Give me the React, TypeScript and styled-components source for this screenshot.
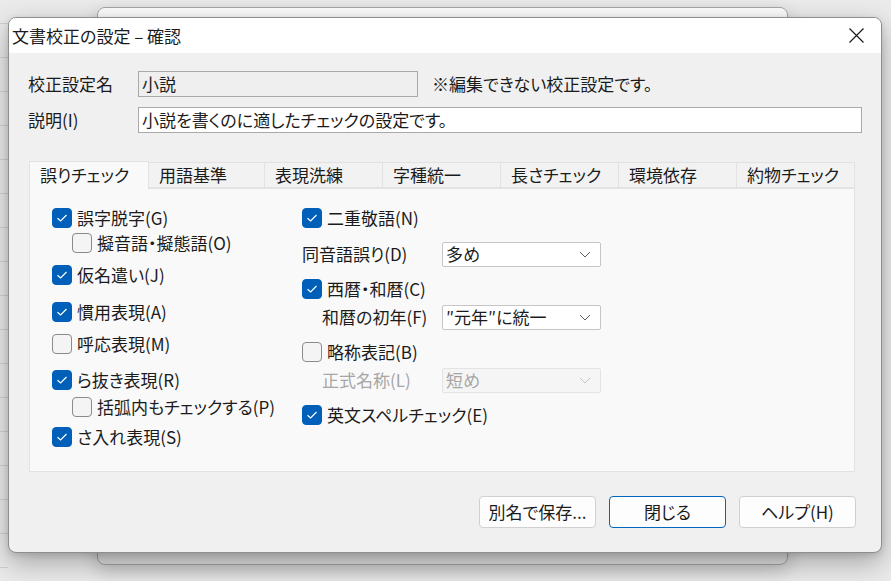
import styled, { createGlobalStyle } from "styled-components";

const GlobalStyle = createGlobalStyle`
  html, body {
    margin: 0;
    padding: 0;
  }
  body {
    font-family: "Noto Sans CJK JP", "Noto Sans", sans-serif;
    font-feature-settings: "palt";
    color: #1b1b1b;
    font-size: 17px;
  }
`;

const tabs = ["誤りチェック", "用語基準", "表現洗練", "字種統一", "長さチェック", "環境依存", "約物チェック"];
const tabWidths = [120, 116, 118, 118, 118, 118, 118];

function Check({ checked }: { checked?: boolean }) {
  return (
    <CheckBox $checked={checked}>
      {checked && (
        <svg width="12" height="10" viewBox="0 0 12 10">
          <path d="M1.5 5.2 L4.6 8 L10.5 2" fill="none" stroke="#fff" strokeWidth="1.2" />
        </svg>
      )}
    </CheckBox>
  );
}

function Chevron({ color = "#5f5f5f" }: { color?: string }) {
  return (
    <svg width="12" height="7" viewBox="0 0 12 7">
      <path d="M1 1 L6 6 L11 1" fill="none" stroke={color} strokeWidth="1" />
    </svg>
  );
}

export default function App() {
  return (
    <Desktop>
      <GlobalStyle />
      <BackWindow>
        <BackTitle />
      </BackWindow>

      <Dialog>
        <TitleBar>
          <Title>文書校正の設定 – 確認</Title>
          <CloseButton>
            <svg width="15" height="15" viewBox="0 0 15 15">
              <path d="M0.5 0.5 L14.5 14.5 M14.5 0.5 L0.5 14.5" stroke="#1b1b1b" strokeWidth="1.2" />
            </svg>
          </CloseButton>
        </TitleBar>

        <Body>
          <FieldRow>
            <FieldLabel>校正設定名</FieldLabel>
            <TextBox $readOnly $width={280}>小説</TextBox>
            <Note>※編集できない校正設定です。</Note>
          </FieldRow>
          <FieldRow $mt={10}>
            <FieldLabel>説明(I)</FieldLabel>
            <TextBox>小説を書くのに適したチェックの設定です。</TextBox>
          </FieldRow>

          <TabArea>
            <TabList>
              {tabs.map((t, i) => (
                <Tab key={t} $active={i === 0} $first={i === 0} $width={tabWidths[i]}>
                  {t}
                </Tab>
              ))}
            </TabList>
            <Panel>
              <Column $width={250}>
                <Row>
                  <Check checked />
                  誤字脱字(G)
                </Row>
                <Row $mt={1} $indent={20}>
                  <Check />
                  擬音語・擬態語(O)
                </Row>
                <Row $mt={8}>
                  <Check checked />
                  仮名遣い(J)
                </Row>
                <Row $mt={13}>
                  <Check checked />
                  慣用表現(A)
                </Row>
                <Row $mt={8}>
                  <Check />
                  呼応表現(M)
                </Row>
                <Row $mt={12}>
                  <Check checked />
                  ら抜き表現(R)
                </Row>
                <Row $mt={3} $indent={20}>
                  <Check />
                  括弧内もチェックする(P)
                </Row>
                <Row $mt={6}>
                  <Check checked />
                  さ入れ表現(S)
                </Row>
              </Column>

              <Column $width={320}>
                <Row>
                  <Check checked />
                  二重敬語(N)
                </Row>
                <Row $mt={12}>
                  <SelectLabel>同音語誤り(D)</SelectLabel>
                  <Select>
                    多め
                    <Chevron />
                  </Select>
                </Row>
                <Row $mt={11}>
                  <Check checked />
                  西暦・和暦(C)
                </Row>
                <Row $mt={4}>
                  <SelectLabel $indent={20}>和暦の初年(F)</SelectLabel>
                  <Select>
                    ″元年″に統一
                    <Chevron />
                  </Select>
                </Row>
                <Row $mt={11}>
                  <Check />
                  略称表記(B)
                </Row>
                <Row $mt={4}>
                  <SelectLabel $indent={20} $disabled>
                    正式名称(L)
                  </SelectLabel>
                  <Select $disabled>
                    短め
                    <Chevron color="#c4c4c4" />
                  </Select>
                </Row>
                <Row $mt={11}>
                  <Check checked />
                  英文スペルチェック(E)
                </Row>
              </Column>
            </Panel>
          </TabArea>

          <Footer>
            <Button>別名で保存...</Button>
            <Button $primary>閉じる</Button>
            <Button>ヘルプ(H)</Button>
          </Footer>
        </Body>
      </Dialog>
    </Desktop>
  );
}

const Desktop = styled.div`
  position: relative;
  width: 891px;
  height: 581px;
  overflow: hidden;
  background-color: #ebebeb;
  background-image: repeating-linear-gradient(
    to bottom,
    transparent 0,
    transparent 33px,
    #d2d2d2 33px,
    #d2d2d2 34px
  );
  background-size: 8px 640px;
  background-position: 0 -10px;
  background-repeat: no-repeat;
`;

const BackWindow = styled.div`
  position: absolute;
  left: 97px;
  top: 7px;
  width: 691px;
  height: 558px;
  box-sizing: border-box;
  border: 1px solid #a4a4a4;
  border-radius: 8px;
  background: #dedede;
  box-shadow: 0 6px 18px rgba(0, 0, 0, 0.18);
  overflow: hidden;
`;

const BackTitle = styled.div`
  height: 35px;
  background: #fbfbfb;
  border-bottom: 1px solid #e6e6e6;
`;

const Dialog = styled.div`
  position: absolute;
  left: 8px;
  top: 17px;
  width: 874px;
  height: 536px;
  box-sizing: border-box;
  display: flex;
  flex-direction: column;
  border: 1px solid #8e8e8e;
  border-radius: 8px;
  background: #f0f0f0;
  overflow: hidden;
  box-shadow: 0 10px 28px rgba(0, 0, 0, 0.3), 0 2px 6px rgba(0, 0, 0, 0.12);
`;

const TitleBar = styled.div`
  height: 35px;
  flex-shrink: 0;
  display: flex;
  align-items: center;
  justify-content: space-between;
  background: #ffffff;
`;

const Title = styled.div`
  padding-left: 3px;
  font-size: 17px;
  line-height: 20px;
  color: #1b1b1b;
`;

const CloseButton = styled.div`
  width: 50px;
  height: 35px;
  display: flex;
  align-items: center;
  justify-content: center;
`;

const Body = styled.div`
  flex: 1;
  display: flex;
  flex-direction: column;
  padding: 18px 19px 0 19px;
`;

const FieldRow = styled.div<{ $mt?: number }>`
  display: flex;
  align-items: center;
  height: 26px;
  margin-top: ${(p) => p.$mt ?? 0}px;
`;

const FieldLabel = styled.div`
  width: 110px;
  flex-shrink: 0;
  font-size: 17px;
  line-height: 20px;
`;

const TextBox = styled.div<{ $readOnly?: boolean; $width?: number }>`
  ${(p) => (p.$width ? `width: ${p.$width}px;` : "flex: 1;")}
  height: 26px;
  box-sizing: border-box;
  display: flex;
  align-items: center;
  padding: 0 3px;
  border: 1px solid #a9a9a9;
  background: ${(p) => (p.$readOnly ? "#efefef" : "#ffffff")};
  font-size: 17px;
  line-height: 20px;
  white-space: nowrap;
`;

const Note = styled.div`
  margin-left: 14px;
  font-size: 17px;
  line-height: 20px;
`;

const TabArea = styled.div`
  margin: 29px 7px 0 1px;
  display: flex;
  flex-direction: column;
`;

const TabList = styled.div`
  display: flex;
  align-items: flex-end;
  height: 26px;
`;

const Tab = styled.div<{ $active?: boolean; $first?: boolean; $width: number }>`
  width: ${(p) => p.$width}px;
  height: ${(p) => (p.$active ? 28 : 26)}px;
  box-sizing: border-box;
  display: flex;
  align-items: center;
  padding-left: 10px;
  padding-bottom: ${(p) => (p.$active ? 2 : 0)}px;
  margin-bottom: ${(p) => (p.$active ? -1 : 0)}px;
  position: relative;
  z-index: ${(p) => (p.$active ? 1 : 0)};
  background: ${(p) => (p.$active ? "#f9f9f9" : "#f2f2f2")};
  border: 1px solid #e2e2e2;
  border-left-width: ${(p) => (p.$first ? 1 : 0)}px;
  border-bottom: ${(p) => (p.$active ? "none" : "1px solid #e2e2e2")};
  font-size: 17px;
  line-height: 20px;
  white-space: nowrap;
`;

const Panel = styled.div`
  height: 284px;
  box-sizing: border-box;
  display: flex;
  padding: 17px 0 0 22px;
  background: #f9f9f9;
  border: 1px solid #e2e2e2;
`;

const Column = styled.div<{ $width: number }>`
  width: ${(p) => p.$width}px;
  display: flex;
  flex-direction: column;
`;

const Row = styled.div<{ $mt?: number; $indent?: number }>`
  display: flex;
  align-items: center;
  gap: 5px;
  height: 24px;
  margin-top: ${(p) => p.$mt ?? 0}px;
  padding-left: ${(p) => p.$indent ?? 0}px;
  font-size: 17px;
  line-height: 20px;
  white-space: nowrap;
`;

const CheckBox = styled.div<{ $checked?: boolean }>`
  width: 20px;
  height: 20px;
  flex-shrink: 0;
  box-sizing: border-box;
  display: flex;
  align-items: center;
  justify-content: center;
  border-radius: 4px;
  border: 1px solid ${(p) => (p.$checked ? "#005fb8" : "#8a8a8a")};
  background: ${(p) => (p.$checked ? "#005fb8" : "#f4f4f4")};
`;

const SelectLabel = styled.div<{ $indent?: number; $disabled?: boolean }>`
  width: ${(p) => 135 - (p.$indent ?? 0)}px;
  padding-left: ${(p) => p.$indent ?? 0}px;
  color: ${(p) => (p.$disabled ? "#a6a6a6" : "#1b1b1b")};
`;

const Select = styled.div<{ $disabled?: boolean }>`
  width: 159px;
  height: 25px;
  box-sizing: border-box;
  display: flex;
  align-items: center;
  justify-content: space-between;
  padding: 0 9px 0 3px;
  border: 1px solid ${(p) => (p.$disabled ? "#e4e4e4" : "#c6c6c6")};
  border-radius: 2px;
  background: ${(p) => (p.$disabled ? "#f5f5f5" : "#ffffff")};
  color: ${(p) => (p.$disabled ? "#a6a6a6" : "#1b1b1b")};
`;

const Footer = styled.div`
  display: flex;
  justify-content: flex-end;
  gap: 13px;
  margin-top: 24px;
  padding-right: 6px;
`;

const Button = styled.div<{ $primary?: boolean }>`
  width: 117px;
  height: 32px;
  box-sizing: border-box;
  display: flex;
  align-items: center;
  justify-content: center;
  border-radius: 4px;
  border: 1px solid ${(p) => (p.$primary ? "#0067c0" : "#d0d0d0")};
  background: #fdfdfd;
  font-size: 17px;
  line-height: 20px;
  white-space: nowrap;
`;
